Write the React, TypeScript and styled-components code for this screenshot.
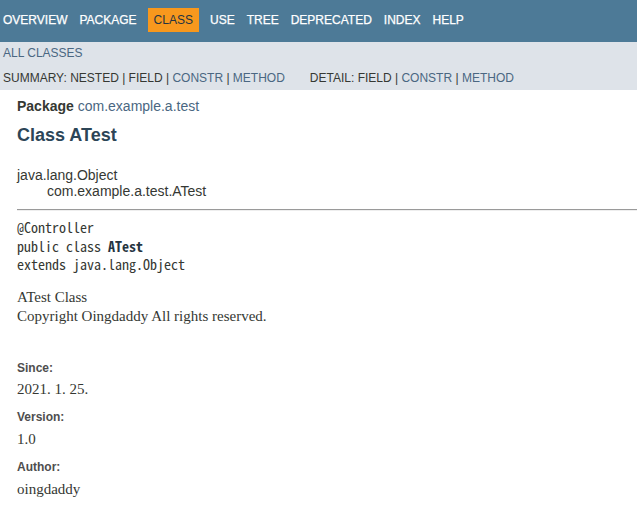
import React from 'react';
import styled, {createGlobalStyle} from 'styled-components';

const GlobalStyle = createGlobalStyle`
  html, body {
    margin: 0;
    padding: 0;
    background: #ffffff;
  }

  body {
    font-family: "Liberation Sans", Arial, Helvetica, sans-serif;
    font-size: 14px;
    color: #353833;
  }
`

const TopNav = styled.nav`
  height: 42px;
  box-sizing: border-box;
  padding-top: 8px;
  background-color: #4d7a97;
  overflow: hidden;
`

const NavList = styled.ul`
  display: flex;
  margin: 0 0 0 -3px;
  padding: 0;
  list-style: none;
`

const NavItem = styled.li<{ $active?: boolean }>`
  padding: 5px 6px;
  margin: ${p => (p.$active ? '0 5px' : '0')};
  font-size: 12px;
  line-height: 14px;
  text-transform: uppercase;
  color: ${p => (p.$active ? '#253441' : '#ffffff')};
  background-color: ${p => (p.$active ? '#f8981d' : 'transparent')};
  -webkit-text-stroke: ${p => (p.$active ? '0' : '0.25px #ffffff')};
`

const SubNav = styled.div`
  display: flex;
  flex-direction: column;
  gap: 11px;
  padding: 4px 0 5px 3px;
  background-color: #dee3e9;
  font-size: 12px;
  line-height: 14px;
  text-transform: uppercase;
`

const SubNavRow = styled.div`
  display: flex;
`

const SubNavList = styled.ul`
  display: flex;
  margin: 0 25px 0 0;
  padding: 0;
  list-style: none;
  white-space: pre;
`

const NavLink = styled.a`
  color: #4a6782;
  text-decoration: none;
`

const Main = styled.main`
  margin: 8px 0 0 17px;
`

const SubTitle = styled.div`
  font-size: 14px;
  line-height: 16px;
`

const Label = styled.span`
  font-weight: bold;
`

const Title = styled.h2`
  margin: 10.5px 0 0;
  font-size: 18px;
  line-height: 21px;
  font-weight: bold;
  color: #2c4557;
`

const Inheritance = styled.div`
  margin-top: 21px;
  font-size: 14px;
  line-height: 16px;
`

const InheritChild = styled.div`
  padding-left: 30px;
`

const Rule = styled.hr`
  height: 0;
  margin: 10.5px 0 0;
  border: 0;
  border-top: 1px solid #9a9a9a;
  border-bottom: 1px solid #eeeeee;
`

const Signature = styled.pre`
  margin: 7px 0 0;
  font-family: "Noto Sans Mono CJK KR", "DejaVu Sans Mono", monospace;
  font-size: 14px;
  line-height: 18.5px;
  color: #353833;
`

const TypeName = styled.span`
  font-weight: bold;
  color: #253441;
`

const Block = styled.div`
  margin-top: 14.4px;
  font-family: "Liberation Serif", Georgia, "Times New Roman", serif;
  font-size: 15px;
  line-height: 19px;
`

const Notes = styled.dl`
  margin: 34.7px 0 0;
`

const Term = styled.dt`
  font-size: 12px;
  line-height: 14px;
  font-weight: bold;
  color: #4e4e4e;
`

const Detail = styled.dd`
  margin: 5.8px 0 10.8px;
  font-family: "Liberation Serif", Georgia, "Times New Roman", serif;
  font-size: 15px;
  line-height: 19px;
`

const topItems = ['Overview', 'Package', 'Class', 'Use', 'Tree', 'Deprecated', 'Index', 'Help'];

const notes = [
    {term: 'Since:', value: '2021. 1. 25.'},
    {term: 'Version:', value: '1.0'},
    {term: 'Author:', value: 'oingdaddy'},
];

export default function App() {
    return (
        <>
            <GlobalStyle/>
            <TopNav>
                <NavList>
                    {topItems.map(item => (
                        <NavItem key={item} $active={item === 'Class'}>{item}</NavItem>
                    ))}
                </NavList>
            </TopNav>
            <SubNav>
                <SubNavRow>
                    <NavLink href="#">All Classes</NavLink>
                </SubNavRow>
                <SubNavRow>
                    <SubNavList>
                        <li>{'Summary:\u00a0'}</li>
                        <li>{'Nested\u00a0|\u00a0'}</li>
                        <li>{'Field\u00a0|\u00a0'}</li>
                        <li><NavLink href="#">Constr</NavLink>{'\u00a0|\u00a0'}</li>
                        <li><NavLink href="#">Method</NavLink></li>
                    </SubNavList>
                    <SubNavList>
                        <li>{'Detail:\u00a0'}</li>
                        <li>{'Field\u00a0|\u00a0'}</li>
                        <li><NavLink href="#">Constr</NavLink>{'\u00a0|\u00a0'}</li>
                        <li><NavLink href="#">Method</NavLink></li>
                    </SubNavList>
                </SubNavRow>
            </SubNav>
            <Main>
                <SubTitle>
                    <Label>Package</Label> <NavLink href="#">com.example.a.test</NavLink>
                </SubTitle>
                <Title>Class ATest</Title>
                <Inheritance>
                    <div>java.lang.Object</div>
                    <InheritChild>com.example.a.test.ATest</InheritChild>
                </Inheritance>
                <Rule/>
                <Signature>
                    {'@Controller\npublic class '}<TypeName>ATest</TypeName>{'\nextends java.lang.Object'}
                </Signature>
                <Block>
                    <div>ATest Class</div>
                    <div>Copyright Oingdaddy All rights reserved.</div>
                </Block>
                <Notes>
                    {notes.map(n => (
                        <React.Fragment key={n.term}>
                            <Term>{n.term}</Term>
                            <Detail>{n.value}</Detail>
                        </React.Fragment>
                    ))}
                </Notes>
            </Main>
        </>
    );
}
